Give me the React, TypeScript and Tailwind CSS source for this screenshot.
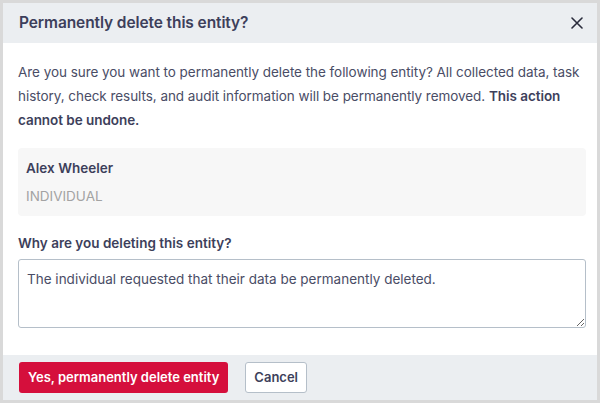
import React from "react";

export default function App() {
  return (
    <div className="w-[600px] h-[403px] bg-[#d9d9d9] p-[3px]" style={{ fontFamily: 'Inter, "Liberation Sans", Arial, sans-serif' }}>
      <div className="w-[594px] h-[397px] bg-white flex flex-col">
        <div className="h-[40px] bg-[#ebeef1] flex items-center justify-between pl-[16px] pr-[14px]">
          <h2 className="text-[15.5px] font-semibold text-[#3d3f5b] tracking-[-0.1px]">Permanently delete this entity?</h2>
          <svg width="12" height="12" viewBox="0 0 12 12" className="text-[#2a2c3c]">
            <path d="M1 1L11 11M11 1L1 11" stroke="currentColor" strokeWidth="1.6" strokeLinecap="round" />
          </svg>
        </div>
        <div className="flex-1 pl-[15px] pr-[11px] pt-[17px] flex flex-col">
          <p className="text-[13.5px] leading-[24px] text-[#4a4d66] tracking-[-0.05px]">
            Are you sure you want to permanently delete the following entity? All collected data, task history, check results, and audit information will be permanently removed. <strong className="font-semibold text-[#3d3f5b]">This action cannot be undone.</strong>
          </p>
          <div className="mt-[16px] h-[68px] rounded-[4px] bg-[#f7f7f7] px-[8px] pt-[10px]">
            <div className="text-[13.5px] font-semibold text-[#3d3f5b] leading-[20px]">Alex Wheeler</div>
            <div className="mt-[8px] text-[13.5px] text-[#a3a3a3] leading-[20px]">INDIVIDUAL</div>
          </div>
          <label className="mt-[17px] text-[13.5px] font-semibold text-[#3d3f5b] leading-[20px]">Why are you deleting this entity?</label>
          <textarea
            className="mt-[6px] h-[69px] w-full rounded-[3px] border border-[#b5bfc9] px-[8px] py-[9px] text-[13.5px] leading-[20px] text-[#4a4d66] outline-none"
            style={{ fontFamily: 'Inter, "Liberation Sans", Arial, sans-serif' }}
            defaultValue="The individual requested that their data be permanently deleted."
          />
        </div>
        <div className="h-[45px] bg-[#ebeef1] flex items-center gap-[17px] px-[16px]">
          <button className="h-[31px] px-[9px] rounded-[3px] bg-[#d50f3c] text-white text-[13px] font-semibold">Yes, permanently delete entity</button>
          <button className="h-[31px] px-[8px] rounded-[3px] bg-white border border-[#b5bfc9] text-[#3d3f5b] text-[13px] font-semibold">Cancel</button>
        </div>
      </div>
    </div>
  );
}
